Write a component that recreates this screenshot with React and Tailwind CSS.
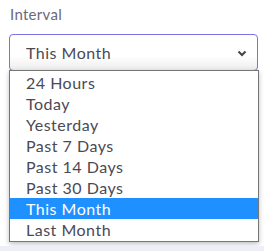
import React from "react";

const items = ["24 Hours", "Today", "Yesterday", "Past 7 Days", "Past 14 Days", "Past 30 Days", "This Month", "Last Month"];

export default function App() {
  return (
    <div className="w-[264px] h-[251px] bg-white flex flex-col" style={{ fontFamily: "Lato, 'Noto Sans', sans-serif" }}>
      <div className="pl-[10px] pr-[6px] pt-[3px] flex-1">
        <div className="text-[15px] leading-[22px] text-[#6a6a7a] tracking-[0.3px]">Interval</div>
        <div className="mt-[9px] ml-[-1px] w-[249px] h-[37px] rounded-[4px] border border-[#7b72e6] bg-gradient-to-b from-white from-60% to-[#ededed] flex items-center pl-[16px] pr-[10px]">
          <span className="flex-1 text-[16px] text-[#4a4a55] tracking-[0.5px]">This Month</span>
          <svg width="10" height="7" viewBox="0 0 10 7" className="mt-[2px]">
            <path d="M1.5 1.5 L5 5 L8.5 1.5" stroke="#444" strokeWidth="2" fill="none" />
          </svg>
        </div>
        <div className="ml-[-1px] mt-[-1px] w-[250px] border border-[#767676] bg-white py-[1px] shadow-[0_2px_5px_rgba(0,0,0,0.25)]">
          {items.map((it) => (
            <div
              key={it}
              className={
                it === "This Month"
                  ? "h-[21px] leading-[21px] pl-[16px] text-[16px] tracking-[0.5px] bg-[#1e90ff] text-white"
                  : "h-[21px] leading-[21px] pl-[16px] text-[16px] tracking-[0.5px] text-[#4a4a55]"
              }
            >
              {it}
            </div>
          ))}
        </div>
      </div>
      <div className="h-[5px] bg-[#eeeef6]" />
    </div>
  );
}
